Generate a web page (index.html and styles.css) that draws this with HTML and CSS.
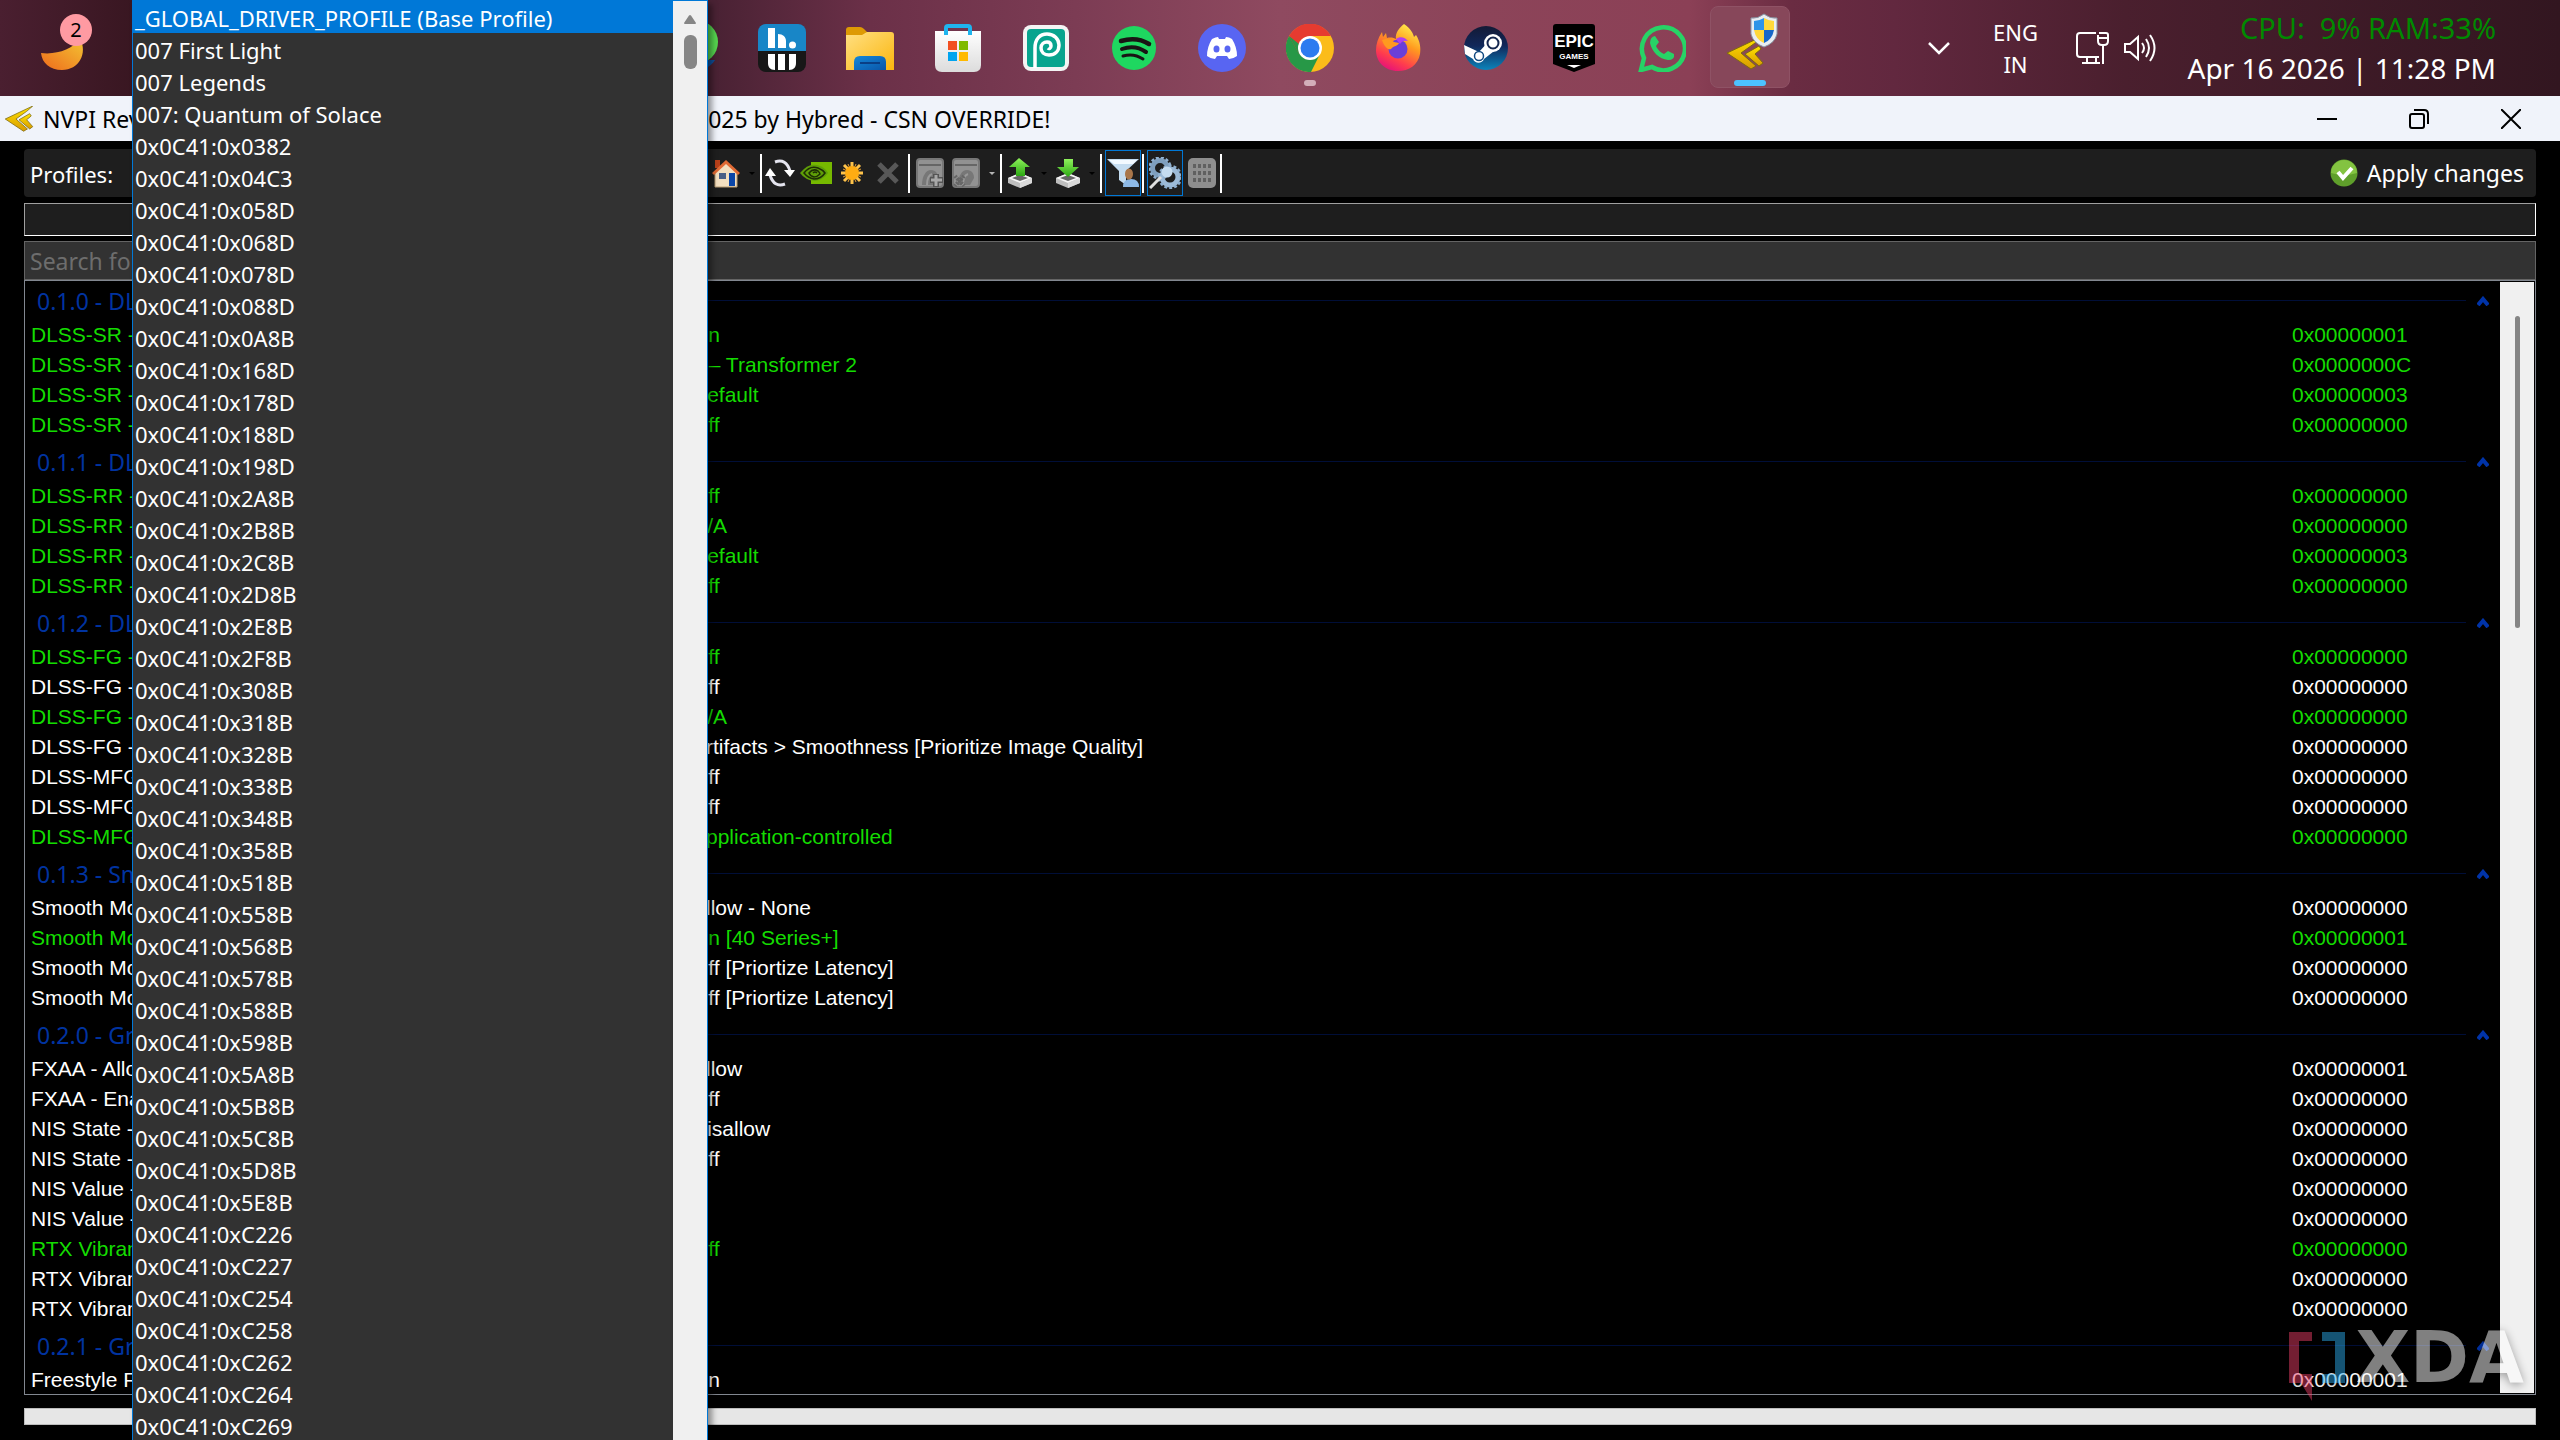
FILE: index.html
```html
<!DOCTYPE html>
<html lang="en">
<head>
<meta charset="utf-8">
<title>NVPI Revamped</title>
<link rel="stylesheet" href="styles.css">
</head>
<body>
<svg class="defs" aria-hidden="true">
  <defs>
    <linearGradient id="gold" x1="0" y1="0" x2="0" y2="1"><stop offset="0" stop-color="#ffe500"/><stop offset="1" stop-color="#d99a00"/></linearGradient>
    <linearGradient id="moon" x1="1" y1="0" x2="0" y2="1"><stop offset="0" stop-color="#f3c433"/><stop offset="1" stop-color="#ee6a1c"/></linearGradient>
    <linearGradient id="folder" x1="0" y1="0" x2="1" y2="1"><stop offset="0" stop-color="#ffe083"/><stop offset="1" stop-color="#fbb60e"/></linearGradient>
    <linearGradient id="fblue" x1="0" y1="0" x2="1" y2="1"><stop offset="0" stop-color="#1488d8"/><stop offset="1" stop-color="#0a55a8"/></linearGradient>
    <linearGradient id="bag" x1="0" y1="0" x2="0" y2="1"><stop offset="0" stop-color="#fff"/><stop offset="1" stop-color="#dcdcdc"/></linearGradient>
    <linearGradient id="steam" x1="0" y1="0" x2="0" y2="1"><stop offset="0" stop-color="#131a35"/><stop offset=".45" stop-color="#11275a"/><stop offset="1" stop-color="#0b84bb"/></linearGradient>
    <linearGradient id="fox" x1=".8" y1="0" x2=".3" y2="1"><stop offset="0" stop-color="#fff44f"/><stop offset=".4" stop-color="#ff9a1f"/><stop offset=".75" stop-color="#ff3d4d"/><stop offset="1" stop-color="#e5117a"/></linearGradient>
    <linearGradient id="leaf" x1="0" y1="0" x2="0" y2="1"><stop offset="0" stop-color="#8ff25c"/><stop offset="1" stop-color="#2ba812"/></linearGradient>
    <symbol id="nvpi" viewBox="0 0 40 34"><path d="M38 0 2 17l24 16 5-3-15-13L30 7z" fill="url(#gold)" stroke="#7d6a10" stroke-width="1"/><path d="M34 10 20 18l14 12 4-3-8-9 6-5z" fill="url(#gold)" stroke="#7d6a10" stroke-width="1"/></symbol>
    <symbol id="winbox" viewBox="0 0 28 30"><rect x="1" y="1" width="26" height="28" rx="3" fill="#929292" stroke="#777" stroke-width="2"/><path d="M3 7h22" stroke="#666" stroke-width="2"/><path d="M6 27c0-9 4-15 9-15s7 4 7 8l-4 7z" fill="#777"/><path d="M11 27c0-6 2-10 5-11" stroke="#999" stroke-width="2" fill="none"/></symbol>
    <symbol id="tray-box" viewBox="0 0 26 30"><path d="M1 20 13 15l12 5v5l-12 5L1 25z" fill="#bdbdbd"/><path d="M1 20 13 15l12 5-12 5z" fill="#f4f4f4"/><path d="M13 25v5l12-5v-5z" fill="#d9d9d9"/><path d="M5 20l8-3 8 3-8 3z" fill="#666"/></symbol>
    <symbol id="up" viewBox="0 0 12 10"><path d="M1 9l5-6 5 6" fill="none" stroke="#0033a8" stroke-width="4"/></symbol>
  </defs>
</svg>

<header class="taskbar">
  <button class="weather" aria-label="Widgets">
    <svg width="56" height="60" viewBox="0 0 56 60"><path d="M42 26c8 14-1 31-18 31C12 57 4 50 3 40c16 2 31-4 39-14z" fill="url(#moon)"/><circle cx="38" cy="17" r="16" fill="#ff9aa2"/></svg>
    <span class="badge">2</span>
  </button>
  <nav class="apps" aria-label="Pinned apps">
    <button class="app" aria-label="Browser"><svg width="48" height="48" viewBox="0 0 48 48"><circle cx="26" cy="18" r="22" fill="#56d44f"/><path d="M4 36h41c-4 7-14 12-22 12S8 43 4 36z" fill="#0d4f9a"/></svg></button>
    <button class="app" aria-label="Headway"><svg width="48" height="48" viewBox="0 0 48 48"><path d="M8 0h32a8 8 0 0 1 8 8v19H0V8a8 8 0 0 1 8-8z" fill="#1886c7"/><path d="M0 27h48v13a8 8 0 0 1-8 8H8a8 8 0 0 1-8-8z" fill="#171717"/><g fill="#fff"><path d="M10 4h7v20h-7zM20 10c5 0 8 3 8 7v7h-8z"/><circle cx="34.500" cy="21" r="3.500"/><path d="M10 30h7v16c-5 0-7-3-7-7zM20 30h7v16h-7zM31 30h7v9c0 4-2 7-7 7z"/></g></svg></button>
    <button class="app" aria-label="File Explorer"><svg width="48" height="48" viewBox="0 0 48 48"><path d="M0 6q0-3 3-3h11q2 0 4 2l4 4v8H0z" fill="#dd9a04"/><path d="M0 11h16l5-3h24q3 0 3 3v35H0z" fill="url(#folder)"/><path d="M8 46V38q0-6 6-6h20q6 0 6 6v8z" fill="url(#fblue)"/><path d="M14 39h20" stroke="#0a3f85" stroke-width="2"/></svg></button>
    <button class="app" aria-label="Store"><svg width="48" height="48" viewBox="0 0 48 48"><path d="M1 7h46v34q0 7-7 7H8q-7 0-7-7z" fill="url(#bag)"/><path d="M12 11V4q0-2 2-2h20q2 0 2 2v7" fill="none" stroke="#1fb4ee" stroke-width="4"/><path d="M14 17h9v9h-9z" fill="#f25022"/><path d="M25 17h9v9h-9z" fill="#7fba00"/><path d="M14 28h9v9h-9z" fill="#00a4ef"/><path d="M25 28h9v9h-9z" fill="#ffb900"/></svg></button>
    <button class="app" aria-label="Picsart"><svg width="48" height="48" viewBox="0 0 48 48"><rect x="1" y="1" width="46" height="46" rx="8" fill="#f4f4f4"/><rect x="5" y="5" width="38" height="38" rx="4" fill="#08a48e"/><path d="M13 44V24C13 15 18 10 25 10c7 0 12 5 12 11s-4 10-10 10c-5 0-8-3-8-7s3-6 6-6 4 2 4 4-2 3-3 2" fill="none" stroke="#fff" stroke-width="3.500"/></svg></button>
    <button class="app" aria-label="Spotify"><svg width="48" height="48" viewBox="0 0 48 48"><circle cx="24" cy="24" r="22" fill="#1ed760"/><g fill="none" stroke="#191414" stroke-linecap="round"><path d="M11 17c10-3 20-2 28 3" stroke-width="4.500"/><path d="M12 25c8-3 17-2 24 3" stroke-width="4"/><path d="M13 32c7-2 14-1 20 3" stroke-width="3"/></g></svg></button>
    <button class="app" aria-label="Discord"><svg width="48" height="48" viewBox="0 0 48 48"><circle cx="24" cy="24" r="24" fill="#5865f2"/><path d="M14 15q4-2 6-2l1 2h6l1-2q3 0 6 2 5 8 5 17-4 3-8 3l-2-3h-10l-2 3q-4 0-8-3 0-9 5-17z" fill="#fff"/><ellipse cx="18.500" cy="25" rx="3" ry="3.500" fill="#5865f2"/><ellipse cx="29.500" cy="25" rx="3" ry="3.500" fill="#5865f2"/></svg></button>
    <button class="app running" aria-label="Chrome"><svg width="48" height="48" viewBox="0 0 48 48"><circle cx="24" cy="24" r="24" fill="#fbbc1a"/><path d="M24 24 34 30 25 48A24 24 0 0 1 3 12z" fill="#279847"/><path d="M3 12A24 24 0 0 1 45 12H24L13 30z" fill="#e63b30"/><path d="M3 12 13 30l5-6z" fill="#279847"/><circle cx="24" cy="24" r="12" fill="#fff"/><circle cx="24" cy="24" r="9.500" fill="#2b7bf0"/></svg></button>
    <button class="app" aria-label="Firefox"><svg width="48" height="48" viewBox="0 0 48 48"><path d="M30 0c7 5 9 9 10 13l2-2c4 6 5 13 4 19-2 11-11 17-22 17C11 47 2 38 2 26c0-6 2-12 6-18l1 5 3-4 1 5c4-1 7 0 9 1-1-6 3-11 8-15z" fill="url(#fox)"/><circle cx="24" cy="25" r="9.500" fill="#6a3fd8"/><path d="M22 15c4-3 9-2 12 2-5-1-6 1-8 3z" fill="#b03ff0"/><path d="M8 16c5-2 9-1 12 2l5 1c-1 3-5 3-7 5-2 3-7 1-10-8z" fill="#ff9a1f"/></svg></button>
    <button class="app" aria-label="Steam"><svg width="48" height="48" viewBox="0 0 48 48"><circle cx="24" cy="24" r="22" fill="url(#steam)"/><path d="M2 21l15 7 9-10 10 6-14 11c-2 5-9 5-11 0L3 30z" fill="#fff"/><circle cx="31" cy="19" r="9" fill="#fff"/><circle cx="31" cy="19" r="5.500" fill="#fff" stroke="#14264f" stroke-width="2"/><circle cx="17" cy="32" r="4.500" fill="none" stroke="#124a80" stroke-width="1.500"/></svg></button>
    <button class="app" aria-label="Epic Games"><svg width="48" height="48" viewBox="0 0 48 48"><path d="M6 0h36q3 0 3 3v37L24 48 3 40V3q0-3 3-3z" fill="#000"/><text x="24" y="23" class="epic">EPIC</text><text x="24" y="35" class="games">GAMES</text><path d="M17 41h14l-7 3z" fill="#fff"/></svg></button>
    <button class="app" aria-label="WhatsApp"><svg width="48" height="48" viewBox="0 0 48 48"><path d="M3 46l3-12A21.500 21.500 0 1 1 14 43z" fill="none" stroke="#27d366" stroke-width="4.500"/><path d="M17 12q-5 1-5 7c2 9 9 16 18 17q7 0 6-6l-6-3-4 3q-6-3-8-8l3-4z" fill="#27d366"/></svg></button>
    <button class="app active" aria-label="NVPI Revamped"><svg width="56" height="60" viewBox="0 0 56 60"><svg x="2" y="24" width="42" height="34"><use href="#nvpi"/></svg><path d="M42 2q6 5 13 4v16q-2 9-13 13-11-4-13-13V6q7 1 13-4z" fill="#e8edf2" stroke="#8a96a5"/><path d="M42 6v12H32V9q5 0 10-3z" fill="#2f94e8"/><path d="M42 6q5 3 10 3v9H42z" fill="#ffd83a"/><path d="M32 18h10v13q-8-3-10-13z" fill="#ffd83a"/><path d="M42 18h10q-2 10-10 13z" fill="#1667c8"/></svg></button>
  </nav>
  <div class="tray">
    <button class="tray-btn" aria-label="Show hidden icons"><svg width="24" height="16" viewBox="0 0 24 16"><path d="M2 3l10 10L22 3" fill="none" stroke="#fff" stroke-width="2.500"/></svg></button>
    <button class="lang">ENG<br>IN</button>
    <button class="status" aria-label="Network and volume">
      <svg width="34" height="34" viewBox="0 0 34 34"><g fill="none" stroke="#fff" stroke-width="2"><path d="M21 2H5q-3 0-3 3v18q0 3 3 3h19M12 26v5M21 26v5M7 32h18"/><path d="M24 2h7q2 0 2 2v6q0 4-4 4h-2q-4 0-4-4V4M28 14v19M24 7h8"/></g></svg>
      <svg width="34" height="30" viewBox="0 0 34 30"><g fill="none" stroke="#fff" stroke-width="2"><path d="M2 11v8h5l8 7V4L7 11zM19 10q4 5 0 10M23 6q6 9 0 18M27 2q9 13 0 26"/></g></svg>
    </button>
    <div class="clock"><span class="load">CPU:&nbsp; 9% RAM:33%</span><time>Apr 16 2026 | 11:28 PM</time></div>
  </div>
</header>

<main class="window">
  <div class="titlebar">
    <svg class="title-icon" width="32" height="26"><use href="#nvpi"/></svg>
    <h1><span class="title-a">NVPI Revamped</span><span>2025 by Hybred - CSN OVERRIDE!</span></h1>
    <div class="controls">
      <button aria-label="Minimize"><svg width="20" height="20"><path d="M0 10h20" stroke="#000" stroke-width="2"/></svg></button>
      <button aria-label="Restore"><svg width="20" height="20" fill="none" stroke="#000" stroke-width="2"><rect x="1" y="5" width="14" height="14" rx="2"/><path d="M5 1h10q4 0 4 4v10"/></svg></button>
      <button aria-label="Close"><svg width="20" height="20"><path d="M0 0l20 20M20 0 0 20" stroke="#000" stroke-width="2"/></svg></button>
    </div>
  </div>

  <div class="body">
    <div class="toolbar">
      <label class="profiles" for="profile">Profiles:</label>
      <button class="w36" aria-label="Home"><svg width="30" height="30" viewBox="0 0 30 30"><path d="M4 2h5v8H4z" fill="#b8401a"/><path d="M4 14 15 4l11 10v15H4z" fill="#f3dfc0" stroke="#b59a72"/><path d="M1 15 15 2l14 13-2 2L15 6 3 17z" fill="#e06a35"/><path d="M8 15h7v6H8z" fill="#4a5f86"/><path d="M18 15h6v13h-6z" fill="#0b46a8"/></svg></button>
      <button class="caret" aria-label="Home options"></button>
      <span class="sep"></span>
      <button class="w32" aria-label="Refresh"><svg width="30" height="30" viewBox="0 0 30 30"><g fill="none" stroke="#e4e4ee" stroke-width="3"><path d="M10 4q11-4 15 9M20 26Q9 30 5 17"/></g><path d="M19 12h11l-5 7zM0 18h11L5 10z" fill="#fff"/></svg></button>
      <button class="w40" aria-label="NVIDIA"><svg width="32" height="22" viewBox="0 0 32 22"><path d="M11 0h21v22H11z" fill="#76b900"/><path d="M0 11Q8 1 17 3q8 2 11 8-5 7-13 8Q5 18 0 11z" fill="#5f9f08"/><g fill="none" stroke="#1d2e05" stroke-width="1.500"><path d="M4 11q6-8 14-5 5 2 7 5-4 6-11 6-6-1-10-6z"/><path d="M9 11q4-5 9-2 2 2 2 3-3 3-6 3-4-1-5-4zM13 11q2-2 4 0"/></g></svg></button>
      <button class="w32" aria-label="New profile"><svg width="22" height="22" viewBox="0 0 22 22"><path d="M11 0v22M0 11h22M3 3l16 16M19 3 3 19" stroke="#ffc34a" stroke-width="3"/><path d="M7 2l8 18M15 2 7 20M2 7l18 8M2 15l18-8" stroke="#e8a030" stroke-width="1"/><circle cx="11" cy="11" r="7" fill="#ffac12"/></svg></button>
      <button class="w40" aria-label="Delete profile"><svg width="22" height="22" viewBox="0 0 22 22"><path d="M2 2l18 18M20 2 2 20" stroke="#585858" stroke-width="5"/></svg></button>
      <span class="sep"></span>
      <button class="w36" aria-label="Add application"><svg width="28" height="30" viewBox="0 0 28 30"><use href="#winbox"/><path d="M20 16v13M14 22h13" stroke="#555" stroke-width="6"/><path d="M20 17v11M15 22h11" stroke="#a8a8a8" stroke-width="3"/></svg></button>
      <button class="w36" aria-label="Remove application"><svg width="28" height="30" viewBox="0 0 28 30"><use href="#winbox"/><path d="M3 18l9 10M12 18 3 28" stroke="#666" stroke-width="4" stroke-dasharray="2 1"/></svg></button>
      <button class="caret light" aria-label="Application options"></button>
      <span class="sep"></span>
      <button class="w32" aria-label="Export"><svg width="26" height="30" viewBox="0 0 26 30"><use href="#tray-box"/><path d="M12 0 23 9h-5v9h-9V9H2z" fill="url(#leaf)"/></svg></button>
      <button class="caret" aria-label="Export options"></button>
      <button class="w32" aria-label="Import"><svg width="26" height="30" viewBox="0 0 26 30"><use href="#tray-box"/><path d="M13 19 24 9h-6V1H9v8H2z" fill="url(#leaf)"/></svg></button>
      <button class="caret" aria-label="Import options"></button>
      <span class="sep"></span>
      <button class="toggle" aria-label="Show customized settings only"><svg width="32" height="30" viewBox="0 0 32 30"><path d="M0 1h32L19 13v14l-7-5v-9z" fill="#c4dcf0"/><path d="M2 2h28l-4 4H7z" fill="#f2f9ff"/><path d="M16 29q0-8 8-8t8 8z" fill="#8db9e6"/><ellipse cx="22" cy="16" rx="4" ry="5.500" fill="#a9764a"/></svg></button>
      <span class="sep"></span>
      <button class="toggle" aria-label="Show unknown settings"><svg width="32" height="32" viewBox="0 0 32 32"><g fill="none" stroke-width="5"><circle cx="11" cy="11" r="7.500" stroke="#7f9fbe"/><circle cx="21" cy="20" r="8" stroke="#9dbbd8"/><g stroke="#8fb0d0" stroke-width="2.500" stroke-dasharray="3 2"><circle cx="11" cy="11" r="10.500"/><circle cx="21" cy="20" r="11"/></g></g><circle cx="18" cy="15" r="5.500" fill="#c5dcf0"/><path d="M12 20 1 31" stroke="#e0e0e0" stroke-width="3"/></svg></button>
      <button class="w36" aria-label="Bit value editor"><svg width="28" height="30" viewBox="0 0 28 30"><rect width="28" height="30" rx="5" fill="#8e8e8e"/><g fill="none" stroke="#606060" stroke-width="4" stroke-dasharray="3 2"><path d="M5 8h19M5 15h19M5 22h19"/></g></svg></button>
      <span class="sep"></span>
      <button class="apply"><svg width="28" height="28" viewBox="0 0 28 28"><circle cx="14" cy="14" r="13.500" fill="#5f9f2b"/><path d="M1 14a13 13 0 0 1 26 0q-13 4-26 0z" fill="#83c341"/><path d="M8 13l5 6 9-10" fill="none" stroke="#fff" stroke-width="4"/></svg>Apply changes</button>
    </div>
    <div class="apps-box"></div>
    <input class="search" type="text" placeholder="Search for setting..." aria-label="Search for setting">

    <div class="list">
      <table>
        <colgroup><col class="c-name"><col><col class="c-hex"></colgroup>
        <tbody>
          <tr class="group"><th colspan="3"><div><span>0.1.0 - DLSS</span><i></i><svg width="12" height="10"><use href="#up"/></svg></div></th></tr>
          <tr class="on"><td>DLSS-SR - Override</td><td>On</td><td>0x00000001</td></tr>
          <tr class="on"><td>DLSS-SR - Preset</td><td>L – Transformer 2</td><td>0x0000000C</td></tr>
          <tr class="on"><td>DLSS-SR - Quality</td><td>Default</td><td>0x00000003</td></tr>
          <tr class="on"><td>DLSS-SR - Scaling</td><td>Off</td><td>0x00000000</td></tr>
        </tbody>
        <tbody>
          <tr class="group"><th colspan="3"><div><span>0.1.1 - DLSS</span><i></i><svg width="12" height="10"><use href="#up"/></svg></div></th></tr>
          <tr class="on"><td>DLSS-RR - Override</td><td>Off</td><td>0x00000000</td></tr>
          <tr class="on"><td>DLSS-RR - Preset</td><td>N/A</td><td>0x00000000</td></tr>
          <tr class="on"><td>DLSS-RR - Quality</td><td>Default</td><td>0x00000003</td></tr>
          <tr class="on"><td>DLSS-RR - Scaling</td><td>Off</td><td>0x00000000</td></tr>
        </tbody>
        <tbody>
          <tr class="group"><th colspan="3"><div><span>0.1.2 - DLSS</span><i></i><svg width="12" height="10"><use href="#up"/></svg></div></th></tr>
          <tr class="on"><td>DLSS-FG - Override</td><td>Off</td><td>0x00000000</td></tr>
          <tr><td>DLSS-FG - Force</td><td>Off</td><td>0x00000000</td></tr>
          <tr class="on"><td>DLSS-FG - Preset</td><td>N/A</td><td>0x00000000</td></tr>
          <tr><td>DLSS-FG - Priority</td><td>Artifacts &gt; Smoothness [Prioritize Image Quality]</td><td>0x00000000</td></tr>
          <tr><td>DLSS-MFG - Override</td><td>Off</td><td>0x00000000</td></tr>
          <tr><td>DLSS-MFG - Force</td><td>Off</td><td>0x00000000</td></tr>
          <tr class="on"><td>DLSS-MFG - Count</td><td>Application-controlled</td><td>0x00000000</td></tr>
        </tbody>
        <tbody>
          <tr class="group"><th colspan="3"><div><span>0.1.3 - Smooth</span><i></i><svg width="12" height="10"><use href="#up"/></svg></div></th></tr>
          <tr><td>Smooth Motion - Allow</td><td>Allow - None</td><td>0x00000000</td></tr>
          <tr class="on"><td>Smooth Motion - Enable</td><td>On [40 Series+]</td><td>0x00000001</td></tr>
          <tr><td>Smooth Motion - Pacing</td><td>Off [Priortize Latency]</td><td>0x00000000</td></tr>
          <tr><td>Smooth Motion - Queue</td><td>Off [Priortize Latency]</td><td>0x00000000</td></tr>
        </tbody>
        <tbody>
          <tr class="group"><th colspan="3"><div><span>0.2.0 - Graphics</span><i></i><svg width="12" height="10"><use href="#up"/></svg></div></th></tr>
          <tr><td>FXAA - Allow</td><td>Allow</td><td>0x00000001</td></tr>
          <tr><td>FXAA - Enable</td><td>Off</td><td>0x00000000</td></tr>
          <tr><td>NIS State - Allow</td><td>Disallow</td><td>0x00000000</td></tr>
          <tr><td>NIS State - Enable</td><td>Off</td><td>0x00000000</td></tr>
          <tr><td>NIS Value - Scale</td><td>0</td><td>0x00000000</td></tr>
          <tr><td>NIS Value - Sharpen</td><td>0</td><td>0x00000000</td></tr>
          <tr class="on"><td>RTX Vibrance - Enable</td><td>Off</td><td>0x00000000</td></tr>
          <tr><td>RTX Vibrance - Level</td><td>0</td><td>0x00000000</td></tr>
          <tr><td>RTX Vibrance - Boost</td><td>0</td><td>0x00000000</td></tr>
        </tbody>
        <tbody>
          <tr class="group"><th colspan="3"><div><span>0.2.1 - Graphics</span><i></i><svg width="12" height="10"><use href="#up"/></svg></div></th></tr>
          <tr><td>Freestyle Filters</td><td>On</td><td>0x00000001</td></tr>
        </tbody>
      </table>
      <div class="scroll"><span class="thumb"></span></div>
    </div>
    <div class="progress"></div>
  </div>
</main>

<div class="popup">
  <select id="profile" size="45">
    <option selected>_GLOBAL_DRIVER_PROFILE (Base Profile)</option>
    <option>007 First Light</option>
    <option>007 Legends</option>
    <option>007: Quantum of Solace</option>
    <option>0x0C41:0x0382</option>
    <option>0x0C41:0x04C3</option>
    <option>0x0C41:0x058D</option>
    <option>0x0C41:0x068D</option>
    <option>0x0C41:0x078D</option>
    <option>0x0C41:0x088D</option>
    <option>0x0C41:0x0A8B</option>
    <option>0x0C41:0x168D</option>
    <option>0x0C41:0x178D</option>
    <option>0x0C41:0x188D</option>
    <option>0x0C41:0x198D</option>
    <option>0x0C41:0x2A8B</option>
    <option>0x0C41:0x2B8B</option>
    <option>0x0C41:0x2C8B</option>
    <option>0x0C41:0x2D8B</option>
    <option>0x0C41:0x2E8B</option>
    <option>0x0C41:0x2F8B</option>
    <option>0x0C41:0x308B</option>
    <option>0x0C41:0x318B</option>
    <option>0x0C41:0x328B</option>
    <option>0x0C41:0x338B</option>
    <option>0x0C41:0x348B</option>
    <option>0x0C41:0x358B</option>
    <option>0x0C41:0x518B</option>
    <option>0x0C41:0x558B</option>
    <option>0x0C41:0x568B</option>
    <option>0x0C41:0x578B</option>
    <option>0x0C41:0x588B</option>
    <option>0x0C41:0x598B</option>
    <option>0x0C41:0x5A8B</option>
    <option>0x0C41:0x5B8B</option>
    <option>0x0C41:0x5C8B</option>
    <option>0x0C41:0x5D8B</option>
    <option>0x0C41:0x5E8B</option>
    <option>0x0C41:0xC226</option>
    <option>0x0C41:0xC227</option>
    <option>0x0C41:0xC254</option>
    <option>0x0C41:0xC258</option>
    <option>0x0C41:0xC262</option>
    <option>0x0C41:0xC264</option>
    <option>0x0C41:0xC269</option>
  </select>
  <div class="popup-scroll">
    <svg width="12" height="9" viewBox="0 0 12 9"><path d="M6 0q1 0 2 2l4 6q0 1-1 1H1Q0 9 0 8l4-6q1-2 2-2z" fill="#858585"/></svg>
    <span class="popup-thumb"></span>
  </div>
</div>

<div class="watermark">
  <svg width="56" height="70" viewBox="0 0 56 70"><path d="M0 0h23v9H10v33h13v27L12 51H0z" fill="#e63c64"/><path d="M33 0h23v51H33v-9h13V9H33z" fill="#2ba8e8"/></svg>
  <span>XDA</span>
</div>
</body>
</html>
```
FILE: styles.css
```css
* { box-sizing: border-box; }

html, body { height: 100%; }

body {
  margin: 0;
  overflow: hidden;
  position: relative;
  display: flex;
  flex-direction: column;
  background: #000;
  color: #fff;
  font-family: "Noto Sans", "Open Sans", sans-serif;
  font-size: 22px;
}

button {
  padding: 0;
  border: 0;
  background: none;
  color: inherit;
  font: inherit;
}

svg { display: block; flex: none; }
.defs { position: absolute; width: 0; height: 0; }

/* Taskbar */
.taskbar {
  display: flex;
  flex: none;
  height: 96px;
  background: linear-gradient(90deg, #4a1f30 0, #36151f 6%, #4a2234 28%, #6b3048 34%, #7c3c54 42%, #8f4a60 50%, #8c4459 58%, #8b4056 66%, #6a2c42 70%, #62283f 74%, #4a1f2e 83%, #321620 100%);
}

.weather {
  position: relative;
  display: flex;
  align-items: flex-start;
  flex: 0 0 650px;
  padding: 13px 0 0 38px;
}

.badge {
  position: absolute;
  left: 60px;
  top: 14px;
  width: 32px;
  line-height: 32px;
  font-size: 20px;
  text-align: center;
  color: #000;
}

.apps { display: flex; }

.app {
  position: relative;
  display: flex;
  align-items: center;
  justify-content: center;
  width: 80px;
  height: 82px;
  margin: 6px 4px 0;
  border-radius: 8px;
  padding-top: 2px;
}

.running::after,
.active::after {
  content: "";
  position: absolute;
  left: 34px;
  bottom: 2px;
  width: 12px;
  height: 6px;
  border-radius: 3px;
  background: #d3aeb9;
}

.active {
  border: 1px solid #8f5265;
  background: #87475a;
  padding: 0 0 10px;
}
.active::after {
  left: 23px;
  bottom: 1px;
  width: 32px;
  background: #4cc2ff;
}

.epic {
  font: bold 17px "Liberation Sans Narrow", "Liberation Sans", sans-serif;
  fill: #fff;
  text-anchor: middle;
}
.games {
  font: bold 8px "Liberation Sans", sans-serif;
  fill: #fff;
  text-anchor: middle;
}

.tray {
  display: flex;
  align-items: center;
  margin-left: auto;
  padding-right: 64px;
}
.tray-btn { margin-right: 40px; }
.lang {
  width: 48px;
  margin-right: 36px;
  line-height: 32px;
}
.status {
  display: flex;
  align-items: center;
  gap: 14px;
  width: 82px;
  margin-right: 30px;
}
.clock {
  display: flex;
  flex-direction: column;
  text-align: right;
  font-size: 28px;
  line-height: 40px;
}
.load {
  color: #008a00;
  font-size: 29px;
}

/* Application window */
.window {
  display: flex;
  flex: 1;
  flex-direction: column;
  min-height: 0;
}

.titlebar {
  display: flex;
  align-items: center;
  flex: none;
  height: 45px;
  padding: 0 3px;
  background: #f0f3fa;
  color: #000;
}
.title-icon { margin-right: 8px; }
h1 {
  display: flex;
  flex: 1;
  margin: 0;
  font-size: 23px;
  font-weight: 400;
  line-height: 32px;
}
.title-a { flex: 0 0 652px; }
.controls { display: flex; }
.controls button {
  display: flex;
  justify-content: center;
  width: 92px;
}

.body {
  display: flex;
  flex: 1;
  flex-direction: column;
  min-height: 0;
  padding: 8px 24px 15px;
  font-size: 23px;
}

.toolbar {
  display: flex;
  align-items: center;
  flex: none;
  height: 48px;
  border-radius: 4px;
  background: #1e1e1e;
}
.profiles {
  flex: 0 0 684px;
  padding: 2px 0 0 6px;
  font-size: 22px;
}
.toolbar button {
  display: flex;
  align-items: center;
  justify-content: center;
}
.w32 { width: 32px; }
.w36 { width: 36px; }
.w40 { width: 40px; }
.toolbar .toggle {
  width: 36px;
  height: 46px;
  margin: 0 1px;
  border: 1px solid #0078d7;
}
.caret { width: 16px; }
.caret::before {
  content: "";
  border: 3px solid transparent;
  border-top-color: #000;
  border-bottom: 0;
}
.light::before { border-top-color: #b4b4b4; }
.sep {
  width: 2px;
  height: 39px;
  margin-right: 2px;
  background: #fff;
}
.toolbar .apply {
  margin-left: auto;
  padding-right: 12px;
  gap: 9px;
}

.apps-box {
  flex: none;
  height: 33px;
  margin-top: 6px;
  border: 1px solid #fff;
  border-top-color: #a0a0a0;
  border-left-color: #a0a0a0;
  background: #1e1e1e;
}

.search {
  flex: none;
  height: 39px;
  margin-top: 5px;
  padding: 0 5px;
  border: 1px solid #646464;
  background: #323232;
  color: #fff;
  font: inherit;
}
.search::placeholder { color: #6d6d6d; }

/* Settings list */
.list {
  display: flex;
  flex: 1;
  align-items: stretch;
  min-height: 0;
  overflow: hidden;
  border: 1px solid #828790;
}

table {
  flex: 1;
  align-self: flex-start;
  width: 100%;
  table-layout: fixed;
  border-collapse: collapse;
  font-family: "Liberation Sans", Arial, sans-serif;
  font-size: 21px;
  line-height: 30px;
}
.c-name { width: 663px; }
.c-hex { width: 211px; }
td {
  height: 30px;
  padding: 0 0 0 4px;
  overflow: hidden;
  white-space: nowrap;
}
td:first-child { padding-left: 6px; }
.on { color: #14dc00; }

th {
  height: 39px;
  padding: 0;
  color: #0033a0;
  font: 23px "Noto Sans", "Open Sans", sans-serif;
}
tbody + tbody th {
  height: 41px;
  padding-top: 2px;
}
th div {
  display: flex;
  align-items: center;
  gap: 11px;
  height: 39px;
  padding: 0 10px 0 12px;
}
th i {
  flex: 1;
  height: 1px;
  background: #000e38;
}

.scroll {
  flex: 0 0 34px;
  margin: 1px;
  background: #f0f0f0;
}
.thumb {
  display: block;
  width: 5px;
  height: 312px;
  margin: 34px auto 0;
  border-radius: 3px;
  background: #858585;
}

.progress {
  flex: none;
  height: 17px;
  margin-top: 13px;
  border: 1px solid #bcbcbc;
  background: #e6e6e6;
}

/* Open profile list */
.popup {
  position: absolute;
  left: 132px;
  top: 0;
  display: flex;
  width: 576px;
  height: 1442px;
  border: 1px solid #0078d7;
  background: #323232;
  box-shadow: 4px 4px 6px rgba(0, 0, 0, .4);
}
.popup select {
  flex: 1;
  padding: 0;
  border: 0;
  border-radius: 0;
  outline: 0;
  overflow: hidden;
  background: #323232;
  color: #fff;
  font: inherit;
}
.popup option {
  height: 32px;
  padding: 2px 2px 0;
  line-height: 30px;
  color: #fff;
}
.popup option:checked {
  background: #0078d7 linear-gradient(#0078d7, #0078d7);
  color: #fff;
}
.popup-scroll {
  display: flex;
  flex: 0 0 34px;
  flex-direction: column;
  align-items: center;
  gap: 11px;
  padding-top: 14px;
  background: #f0f0f0;
}
.popup-thumb {
  width: 13px;
  height: 34px;
  border-radius: 6px;
  background: #858585;
}

/* Corner logo */
.watermark {
  position: absolute;
  right: 36px;
  bottom: 38px;
  display: flex;
  gap: 10px;
  opacity: .5;
  filter: drop-shadow(0 2px 5px rgba(0, 0, 0, .7));
  font: bold 71px/70px "DejaVu Sans", sans-serif;
}
.watermark span { margin-top: -9px; }
```
